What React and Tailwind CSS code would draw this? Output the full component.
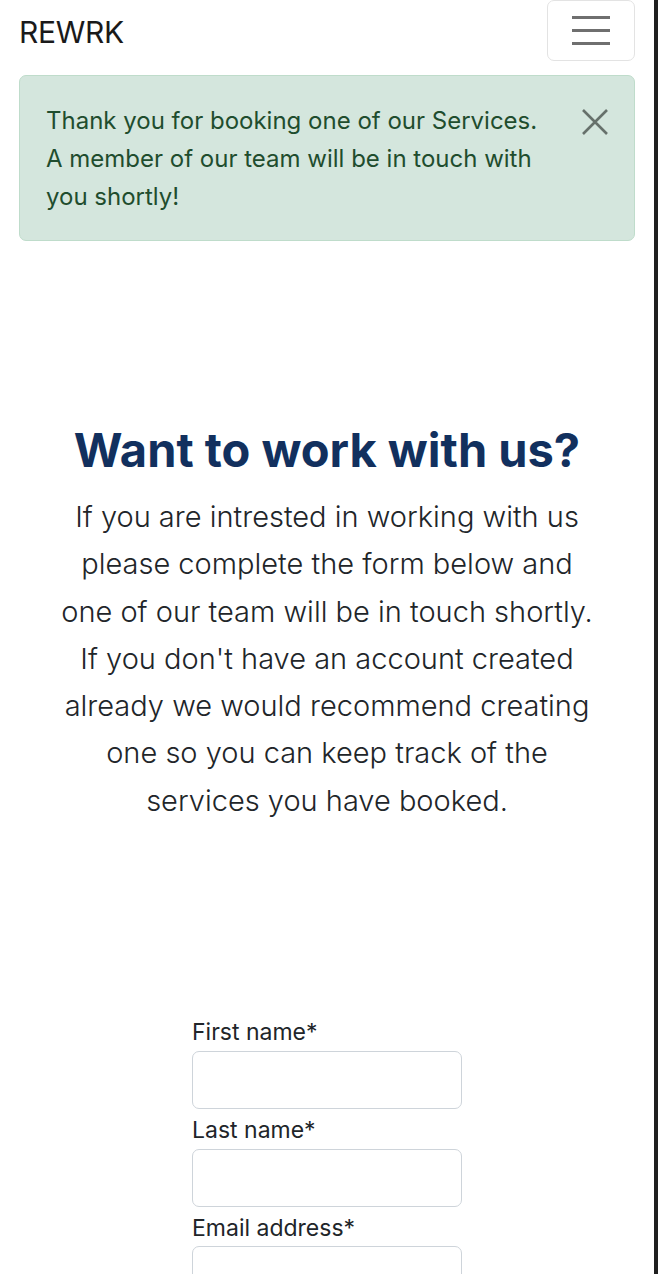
export default function App() {
  return (
    <div className="flex min-h-[1274px] w-[658px] bg-white">
      <div className="w-[654px] shrink-0 px-[19px]" style={{ fontFamily: "Inter, 'Noto Sans', sans-serif" }}>
        {/* navbar */}
        <div className="flex h-[75px] items-start justify-between">
          <span className="mt-[12px] text-[30px] leading-[40px] tracking-[-0.3px] text-[#1a1a1a]">REWRK</span>
          <button className="flex h-[61px] w-[88px] flex-col items-center justify-center gap-[10px] rounded-[7px] border border-[#e3e3e3] bg-white">
            <span className="block h-[3px] w-[38px] bg-[#6f6f6f]" />
            <span className="block h-[3px] w-[38px] bg-[#6f6f6f]" />
            <span className="block h-[3px] w-[38px] bg-[#6f6f6f]" />
          </button>
        </div>

        {/* alert */}
        <div className="relative h-[166px] rounded-[7px] border border-[#bfdccb] bg-[#d4e6dd] py-[26px] pl-[26px] pr-[80px] text-[24px] leading-[38px] text-[#1f4d2e]">
          Thank you for booking one of our Services. A member of our team will be in touch with you shortly!
          <svg className="absolute right-[26px] top-[33px] h-[26px] w-[26px]" viewBox="0 0 26 26" fill="none" stroke="#66716b" strokeWidth="2.6">
            <path d="M1 1L25 25M25 1L1 25" />
          </svg>
        </div>

        {/* intro */}
        <div className="mt-[180px] text-center">
          <h1 className="text-[47px] font-bold leading-[58px] text-[#12305e]">Want to work with us?</h1>
          <p className="mt-[14px] text-[29px] font-light leading-[47.3px] text-[#212529]">
            If you are intrested in working with us<br />
            please complete the form below and<br />
            one of our team will be in touch shortly.<br />
            If you don't have an account created<br />
            already we would recommend creating<br />
            one so you can keep track of the<br />
            services you have booked.
          </p>
        </div>

        {/* form */}
        <form className="ml-[173px] mt-[188px] w-[270px] text-[23px] text-[#212529]">
          <label className="block h-[39px] pt-[1px] leading-[38px]">First name*</label>
          <input className="block h-[58px] w-[270px] rounded-[7px] border border-[#ced4da] bg-white" />
          <label className="block h-[40px] pt-[2px] leading-[38px]">Last name*</label>
          <input className="block h-[58px] w-[270px] rounded-[7px] border border-[#ced4da] bg-white" />
          <label className="block h-[39px] pt-[2px] leading-[38px]">Email address*</label>
          <input className="block h-[58px] w-[270px] rounded-[7px] border border-[#ced4da] bg-white" />
        </form>
      </div>
      <div className="w-[4px] shrink-0 bg-[#1f1f1f]" />
    </div>
  );
}
